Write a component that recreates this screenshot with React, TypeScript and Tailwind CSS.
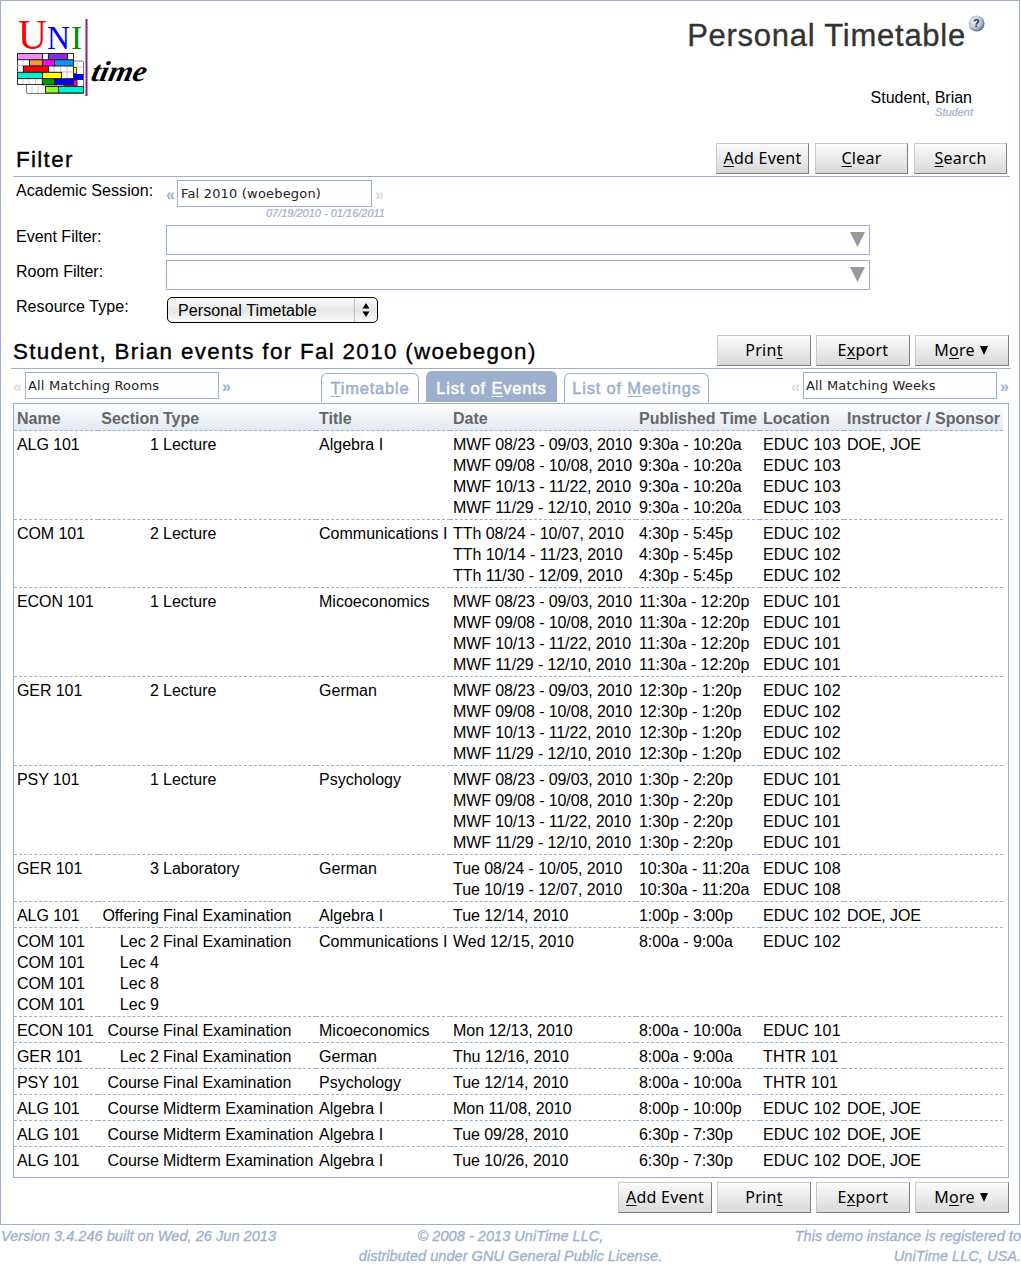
import React from "react";

const SANS = "font-['Liberation_Sans',Arial,sans-serif]";

type Ev = {
  name: string[];
  section: string[];
  type: string;
  title: string;
  dates: string[];
  time: string;
  room: string;
  who?: string;
};

const mwf = ["MWF 08/23 - 09/03, 2010", "MWF 09/08 - 10/08, 2010", "MWF 10/13 - 11/22, 2010", "MWF 11/29 - 12/10, 2010"];

const events: Ev[] = [
  { name: ["ALG 101"], section: ["1"], type: "Lecture", title: "Algebra I", dates: mwf, time: "9:30a - 10:20a", room: "EDUC 103", who: "DOE, JOE" },
  { name: ["COM 101"], section: ["2"], type: "Lecture", title: "Communications I", dates: ["TTh 08/24 - 10/07, 2010", "TTh 10/14 - 11/23, 2010", "TTh 11/30 - 12/09, 2010"], time: "4:30p - 5:45p", room: "EDUC 102" },
  { name: ["ECON 101"], section: ["1"], type: "Lecture", title: "Micoeconomics", dates: mwf, time: "11:30a - 12:20p", room: "EDUC 101" },
  { name: ["GER 101"], section: ["2"], type: "Lecture", title: "German", dates: mwf, time: "12:30p - 1:20p", room: "EDUC 102" },
  { name: ["PSY 101"], section: ["1"], type: "Lecture", title: "Psychology", dates: mwf, time: "1:30p - 2:20p", room: "EDUC 101" },
  { name: ["GER 101"], section: ["3"], type: "Laboratory", title: "German", dates: ["Tue 08/24 - 10/05, 2010", "Tue 10/19 - 12/07, 2010"], time: "10:30a - 11:20a", room: "EDUC 108" },
  { name: ["ALG 101"], section: ["Offering"], type: "Final Examination", title: "Algebra I", dates: ["Tue 12/14, 2010"], time: "1:00p - 3:00p", room: "EDUC 102", who: "DOE, JOE" },
  { name: ["COM 101", "COM 101", "COM 101", "COM 101"], section: ["Lec 2", "Lec 4", "Lec 8", "Lec 9"], type: "Final Examination", title: "Communications I", dates: ["Wed 12/15, 2010"], time: "8:00a - 9:00a", room: "EDUC 102" },
  { name: ["ECON 101"], section: ["Course"], type: "Final Examination", title: "Micoeconomics", dates: ["Mon 12/13, 2010"], time: "8:00a - 10:00a", room: "EDUC 101" },
  { name: ["GER 101"], section: ["Lec 2"], type: "Final Examination", title: "German", dates: ["Thu 12/16, 2010"], time: "8:00a - 9:00a", room: "THTR 101" },
  { name: ["PSY 101"], section: ["Course"], type: "Final Examination", title: "Psychology", dates: ["Tue 12/14, 2010"], time: "8:00a - 10:00a", room: "THTR 101" },
  { name: ["ALG 101"], section: ["Course"], type: "Midterm Examination", title: "Algebra I", dates: ["Mon 11/08, 2010"], time: "8:00p - 10:00p", room: "EDUC 102", who: "DOE, JOE" },
  { name: ["ALG 101"], section: ["Course"], type: "Midterm Examination", title: "Algebra I", dates: ["Tue 09/28, 2010"], time: "6:30p - 7:30p", room: "EDUC 102", who: "DOE, JOE" },
  { name: ["ALG 101"], section: ["Course"], type: "Midterm Examination", title: "Algebra I", dates: ["Tue 10/26, 2010"], time: "6:30p - 7:30p", room: "EDUC 102", who: "DOE, JOE" },
];

/* Splits a label around its underlined access key. */
function Keyed({ text, at }: { text: string; at: number }) {
  return (
    <span className="whitespace-pre">
      {text.slice(0, at)}
      <span className="underline decoration-1 underline-offset-2">{text[at]}</span>
      {text.slice(at + 1)}
    </span>
  );
}

function Button({ text, at, narrow, arrow }: { text: string; at: number; narrow?: boolean; arrow?: boolean }) {
  return (
    <button
      className={`${narrow ? "w-[93px]" : "w-[94px]"} flex h-[31px] items-center justify-center border border-t-[#c8c8c8] border-l-[#c8c8c8] border-r-[#7d7d7d] border-b-[#7d7d7d] bg-linear-to-b from-[#fbfbfb] to-[#d9d9d9] pb-px font-['Noto_Sans',sans-serif] text-[16px] tracking-[0.25px] text-black`}
    >
      <Keyed text={text} at={at} />
      {arrow && (
        <svg className="mr-[2px] ml-[5px] h-[9px] w-[8px]" viewBox="0 0 8 9">
          <path d="M0 0H8L4 9Z" fill="#000" />
        </svg>
      )}
    </button>
  );
}

function Guillemet({ right, faded }: { right?: boolean; faded?: boolean }) {
  return (
    <span className={`${faded ? "text-[#dcdcdc]" : "text-[#9cb0ce]"} text-[16px] leading-[20px] font-bold`}>{right ? "»" : "«"}</span>
  );
}

const inputText = "font-['DejaVu_Sans',sans-serif] text-[13px] tracking-[0.18px] text-[#222]";

function Blocks() {
  const cells: [number, number, number, string][] = [
    [17, 53, 25, "#f08cf0"],
    [48, 53, 19, "#8a2be2"],
    [29, 59.3, 13, "#ff9a33"],
    [42, 59.3, 12, "#ff00ff"],
    [54, 59.3, 19, "#0a96ff"],
    [23, 65.6, 25, "#ff0000"],
    [17, 71.9, 25, "#00f0d0"],
    [42, 71.9, 19, "#ffff00"],
    [42, 78.2, 12, "#009a00"],
    [54, 78.2, 19, "#0000ee"],
  ];
  const xs = [23, 29, 35.5, 42, 48, 54, 60.5, 67];
  return (
    <g>
      <rect x="26.500" y="61" width="57" height="32.500" rx="1.500" fill="#fff" stroke="#777" />
      <path d="M32 86V93M38 86V93M77 61V86M73 67H83" stroke="#ccc" />
      <rect x="73.500" y="67.500" width="3" height="6" fill="#ffff00" stroke="#555" />
      <rect x="73" y="74" width="10.500" height="6" fill="#0000ee" />
      <rect x="64" y="80" width="13" height="6" fill="#f000e0" stroke="#333" />
      <rect x="45.500" y="86.500" width="13" height="6.500" fill="#90ff30" stroke="#222" />
      <rect x="58.500" y="86.500" width="25" height="6.500" fill="#00f0d0" stroke="#222" />
      <rect x="17.500" y="53.500" width="56" height="31" fill="#fff" stroke="#333" />
      {xs.map((x) => (
        <path key={x} d={`M${x} 54V84`} stroke="#ccc" />
      ))}
      <path d="M17 59.500H73M17 65.500H73M17 72H73M17 78.500H73" stroke="#bbb" />
      {cells.map(([x, y, w, c]) => (
        <rect key={`${x}-${y}`} x={x + 0.5} y={y + 0.5} width={w} height="6.2" fill={c} stroke="#222" />
      ))}
    </g>
  );
}

function Logo() {
  return (
    <svg className="h-[94px] w-[140px]" viewBox="14 5 140 94">
      <g fontFamily="'Liberation Serif', serif">
        <text x="18" y="49" fontSize="42" fill="#ff0000" textLength="29" lengthAdjust="spacingAndGlyphs">U</text>
        <text x="47" y="49" fontSize="33" fill="#0000ff" textLength="23" lengthAdjust="spacingAndGlyphs">N</text>
        <text x="71" y="49" fontSize="33" fill="#008a00" textLength="11" lengthAdjust="spacingAndGlyphs">I</text>
        <text transform="translate(90 81) skewX(-12)" fontSize="29" fontWeight="bold" fontStyle="italic" textLength="55" lengthAdjust="spacingAndGlyphs">time</text>
      </g>
      <Blocks />
      <path d="M86.500 19V96" stroke="#8a1a9a" strokeWidth="2" />
    </svg>
  );
}

function Help() {
  return (
    <svg className="h-[17px] w-[17px]" viewBox="0 0 17 17">
      <defs>
        <radialGradient id="ball" cx="0.38" cy="0.38" r="0.7">
          <stop offset="0" stopColor="#f4f7fb" />
          <stop offset="0.6" stopColor="#b4c2d2" />
          <stop offset="1" stopColor="#44525f" />
        </radialGradient>
      </defs>
      <circle cx="8.500" cy="8.500" r="8" fill="url(#ball)" />
      <text x="8.300" y="12.300" textAnchor="middle" fontFamily="Liberation Sans" fontWeight="bold" fontSize="11" fill="#1d2a4d">?</text>
    </svg>
  );
}

function FilterBox() {
  return (
    <div className="mt-[2px] flex h-[30px] w-[704px] items-center justify-end border border-[#9cb0ce] pr-[4px] pb-px">
      <svg className="h-[15px] w-[15px]" viewBox="0 0 15 15">
        <path d="M0 0H15L7.500 15Z" fill="#999" />
      </svg>
    </div>
  );
}

function Picker({ text }: { text: string }) {
  return <div className={`flex h-[27px] w-[194px] items-center border border-[#9cb0ce] pl-[2px] ${inputText}`}>{text}</div>;
}

function Tab({ text, at, active, width }: { text: string; at: number; active?: boolean; width: string }) {
  return (
    <div
      className={`${width} ${active ? "h-[31px] bg-[#9cb0ce] text-white" : "h-[29px] border border-b-0 border-[#9cb0ce] text-[#9cb0ce]"} flex items-end justify-center rounded-t-[6px] pb-[4px] text-[16.5px] leading-[20px] tracking-[0.8px] [-webkit-text-stroke:0.5px_currentColor]`}
    >
      <Keyed text={text} at={at} />
    </div>
  );
}

const cell = "px-[3px] pt-[3px] pb-px align-top whitespace-nowrap";
const heading = "text-[22.4px] leading-[26px] tracking-[1.32px] [-webkit-text-stroke:0.35px_#000]";

export default function App() {
  return (
    <div className={`${SANS} h-[1268px] w-[1021px] overflow-hidden bg-white text-[16px] leading-[21px] text-black`}>
      <main className="h-[1225px] w-[1020px] border border-[#9cb0ce]">
        <header className="flex h-[141px] items-start justify-between pt-[4px] pl-[13px]">
          <Logo />
          <div className="flex w-[340px] flex-col items-end pt-[10px]">
            <div className="flex items-start pr-[34px]">
              <h1 className="mt-[3px] text-[31px] leading-[36px] tracking-[0.75px] whitespace-nowrap text-[#333] [-webkit-text-stroke:0.35px_#333]">Personal Timetable</h1>
              <span className="ml-[2px]"><Help /></span>
            </div>
            <div className="mt-[34px] pr-[47px] leading-[20px]">Student, Brian</div>
            <div className="-mt-px pr-[46px] text-[11px] leading-[10px] text-[#9cb0ce] italic [-webkit-text-stroke:0.2px_#9cb0ce]">Student</div>
          </div>
        </header>

        <div className="ml-[12px] flex h-[35px] w-[997px] items-start justify-between border-b border-[#9cb0ce] pt-px pr-[3px] pl-[2px]">
          <h2 className={`${heading} mt-[4px] pl-px`}>Filter</h2>
          <div className="flex gap-[6px]">
            <Button text="Add Event" at={0} narrow />
            <Button text="Clear" at={0} narrow />
            <Button text="Search" at={0} narrow />
          </div>
        </div>

        <section className="pl-[15px]">
          <div className="flex h-[46px]">
            <div className="w-[150px] pt-[3px] tracking-[0.07px]">Academic Session:</div>
            <div className="w-[219px]">
              <div className="flex h-[30px] items-center pt-[3px]">
                <span className="w-[11px] pt-[2px]"><Guillemet /></span>
                <div className={`flex h-[27px] w-[195px] items-center border border-[#9cb0ce] pl-[3px] ${inputText}`}>Fal 2010 (woebegon)</div>
                <span className="pt-[2px] pl-[3px]"><Guillemet right faded /></span>
              </div>
              <div className="text-right text-[11px] leading-[13px] text-[#9cb0ce] italic [-webkit-text-stroke:0.2px_#9cb0ce]">07/19/2010 - 01/16/2011</div>
            </div>
          </div>
          <div className="flex h-[35px]">
            <div className="w-[150px] pt-[3px]">Event Filter:</div>
            <FilterBox />
          </div>
          <div className="flex h-[35px]">
            <div className="w-[150px] pt-[3px]">Room Filter:</div>
            <FilterBox />
          </div>
          <div className="flex h-[35px]">
            <div className="w-[151px] pt-[3px] tracking-[0.07px]">Resource Type:</div>
            <div className="mt-[4px] flex h-[26px] w-[211px] items-center rounded-[5px] border border-black bg-linear-to-b from-[#fafafa] via-[#e6e6e6] to-[#fafafa] pl-[10px]">
              <span className="flex-1 tracking-[0.1px]">Personal Timetable</span>
              <span className="flex h-full w-[23px] items-center justify-center border-l border-[#bbb]">
                <svg className="h-[14px] w-[8px]" viewBox="0 0 8 14">
                  <path d="M4 0L7.500 5.500H0.500ZM4 14L7.500 8.500H0.500Z" />
                </svg>
              </span>
            </div>
          </div>
        </section>

        <div className="ml-[10px] flex h-[41px] w-[1000px] items-start justify-between border-b border-[#9cb0ce] pt-[7px] pr-[2px] pl-[2px]">
          <h2 className={`${heading} mt-[4px] whitespace-nowrap`}>Student, Brian events for Fal 2010 (woebegon)</h2>
          <div className="flex gap-[5px]">
            <Button text="Print" at={4} />
            <Button text="Export" at={1} />
            <Button text="More" at={1} arrow />
          </div>
        </div>

        <div className="flex h-[34px] pl-[12px]">
          <div className="flex h-[33px] w-[308px] items-start pt-[3px]">
            <span className="w-[12px] pt-[4px]"><Guillemet faded /></span>
            <Picker text="All Matching Rooms" />
            <span className="pt-[4px] pl-[3px]"><Guillemet right /></span>
          </div>
          <div className="flex h-[33px] w-[470px] items-end gap-[7px]">
            <Tab text="Timetable" at={0} width="w-[98px]" />
            <Tab text="List of Events" at={8} active width="w-[131px]" />
            <Tab text="List of Meetings" at={8} width="w-[145px]" />
          </div>
          <div className="flex items-start pt-[3px]">
            <span className="w-[12px] pt-[4px]"><Guillemet faded /></span>
            <Picker text="All Matching Weeks" />
            <span className="pt-[4px] pl-[3px]"><Guillemet right /></span>
          </div>
        </div>

        <div className="ml-[12px] h-[775px] w-[996px] border border-[#9cb0ce]">
          <table className="w-[989px] table-fixed border-separate border-spacing-0">
            <colgroup>
              <col className="w-[84px]" />
              <col className="w-[62px]" />
              <col className="w-[156px]" />
              <col className="w-[134px]" />
              <col className="w-[186px]" />
              <col className="w-[124px]" />
              <col className="w-[84px]" />
              <col className="w-[159px]" />
            </colgroup>
            <thead>
              <tr className="bg-linear-to-b from-[#fdfdfe] to-[#e2e7f2] text-left text-[#666]">
                {["Name", "Section", "Type", "Title", "Date", "Published Time", "Location", "Instructor / Sponsor"].map((h) => (
                  <th key={h} className={`h-[27px] border-b border-dashed border-[#9cb0ce] pt-[4px] pb-px font-bold whitespace-nowrap ${h === "Section" ? "pr-px pl-0 text-right" : "px-[3px]"}`}>
                    {h}
                  </th>
                ))}
              </tr>
            </thead>
            <tbody className="[&>tr:last-child>td]:border-b-0 [&>tr>td]:border-b [&>tr>td]:border-dashed [&>tr>td]:border-[#9cb0ce]">
              {events.map((e, i) => (
                <tr key={i}>
                  <td className={`${cell} tracking-[-0.08px]`}>{e.name.map((n, k) => <div key={k}>{n}</div>)}</td>
                  <td className={`${cell} pr-px text-right`}>{e.section.map((s, k) => <div key={k}>{s}</div>)}</td>
                  <td className={`${cell} ${e.type === "Final Examination" ? "tracking-[0.08px]" : ""}`}>{e.type}</td>
                  <td className={`${cell} tracking-[0.02px]`}>{e.title}</td>
                  <td className={`${cell} ${e.dates === mwf ? "tracking-[-0.1px]" : "tracking-[-0.04px]"}`}>{e.dates.map((d) => <div key={d}>{d}</div>)}</td>
                  <td className={`${cell} tracking-[-0.04px]`}>{e.dates.map((d) => <div key={d}>{e.time}</div>)}</td>
                  <td className={`${cell} tracking-[0.15px]`}>{e.dates.map((d) => <div key={d}>{e.room}</div>)}</td>
                  <td className={`${cell} tracking-[-0.1px]`}>{e.who}</td>
                </tr>
              ))}
            </tbody>
          </table>
        </div>

        <div className="mt-[4px] flex justify-end gap-[5px] pr-[10px]">
          <Button text="Add Event" at={0} />
          <Button text="Print" at={4} />
          <Button text="Export" at={1} />
          <Button text="More" at={1} arrow />
        </div>
      </main>

      <footer className="grid grid-cols-3 pt-px text-[14.6px] leading-[20px] whitespace-nowrap text-[#9cb0ce] italic [-webkit-text-stroke:0.3px_#9cb0ce]">
        <div className="pl-px">Version 3.4.246 built on Wed, 26 Jun 2013</div>
        <div className="text-center">
          © 2008 - 2013 UniTime LLC,
          <br />
          distributed under GNU General Public License.
        </div>
        <div className="text-right">
          This demo instance is registered to
          <br />
          UniTime LLC, USA.
        </div>
      </footer>
    </div>
  );
}
